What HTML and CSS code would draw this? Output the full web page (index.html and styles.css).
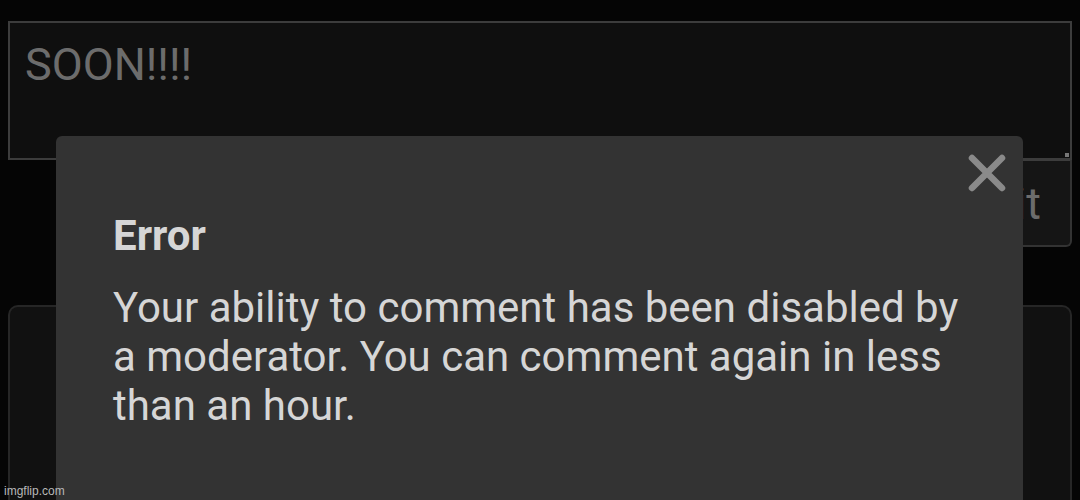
FILE: index.html
```html
<html>
  <head>
    <link rel="stylesheet" href="styles.css">
  </head>
  <body>
    <div class="page">
      <div class="composer">
        <div class="textarea">SOON!!!!<span class="grip"></span></div>
        <div class="actions">
          <button class="submit">Submit</button>
        </div>
      </div>
      <div class="card"></div>
    </div>

    <div class="modal">
      <button class="close" aria-label="Close">
        <svg width="38" height="38" viewBox="0 0 38 38">
          <path d="M4 4 L34 34 M34 4 L4 34" stroke="#8a8a8a" stroke-width="6.5" stroke-linecap="round" />
        </svg>
      </button>
      <h2 class="title">Error</h2>
      <p class="message">
        Your ability to comment has been disabled by a moderator. You can
        comment again in less than an hour.
      </p>
    </div>

    <div class="watermark">imgflip.com</div>
  </body>
</html>
```

FILE: styles.css
```css
*,
*::before,
*::after {
  padding: 0;
  margin: 0;
  box-sizing: border-box;
}

html,
body {
  height: 100%;
}

body {
  font-family: Roboto, "Noto Sans", sans-serif;
  background-color: #050505;
  color: #ddd;
  overflow: hidden;
  position: relative;
}

.page {
  padding: 21px 8px 0 8px;
}

.textarea {
  position: relative;
  height: 139px;
  background-color: #0f0f0f;
  border: 2px solid #3c3c3c;
  color: #6c6c6c;
  font-size: 45px;
  line-height: 1;
  padding: 19px 0 0 15px;
}

.grip {
  position: absolute;
  right: 1px;
  bottom: 1px;
  width: 4px;
  height: 4px;
  background-color: #777;
}

.actions {
  display: flex;
  justify-content: flex-end;
}

.submit {
  width: 200px;
  height: 88px;
  margin-top: -1px;
  background-color: #151515;
  border: 2px solid #333;
  border-top-color: #3c3c3c;
  border-radius: 0 0 6px 6px;
  color: #6c6c6c;
  font-family: Roboto, sans-serif;
  font-size: 45px;
  text-align: right;
  padding: 0 29px 0 0;
  white-space: nowrap;
}

.card {
  margin-top: 58px;
  height: 195px;
  background-color: #111;
  border: 2px solid #262626;
  border-bottom: none;
  border-radius: 10px 10px 0 0;
}

.modal {
  position: absolute;
  left: 56px;
  top: 136px;
  width: 967px;
  height: 364px;
  background-color: #333;
  border-radius: 6px 6px 0 0;
  padding: 79px 50px 0 57px;
}

.close {
  position: absolute;
  right: 17px;
  top: 18px;
  width: 38px;
  height: 38px;
  background: none;
  border: none;
}

.close svg {
  display: block;
}

.title {
  font-size: 42px;
  font-weight: 700;
  color: #d6d6d6;
  line-height: 1;
  margin-bottom: 26px;
}

.message {
  font-size: 42px;
  line-height: 49px;
  color: #d6d6d6;
}

.watermark {
  position: absolute;
  left: 4px;
  bottom: 2px;
  font-family: "Liberation Sans", sans-serif;
  font-size: 12px;
  color: #b8b8b8;
}
```
